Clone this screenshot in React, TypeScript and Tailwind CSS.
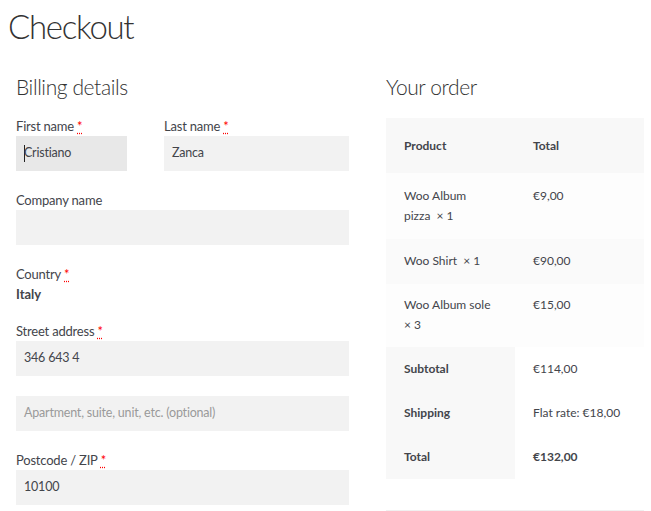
import React from "react";

const font = { fontFamily: "Lato, 'Noto Sans', sans-serif" };

function Req() {
  return (
    <abbr
      className="ml-[3px] text-[#ff0000] no-underline"
      style={{ textDecoration: "underline dotted", textUnderlineOffset: "2px" }}
      title="required"
    >
      *
    </abbr>
  );
}

function Label({ children, req }: { children: React.ReactNode; req?: boolean }) {
  return (
    <div className="h-[18px] text-[13px] leading-[16px] tracking-[-0.2px] text-[#43454b]">
      {children}
      {req && <Req />}
    </div>
  );
}

function Input({
  value,
  placeholder,
  focused,
  className = "",
}: {
  value?: string;
  placeholder?: string;
  focused?: boolean;
  className?: string;
}) {
  return (
    <div
      className={`flex h-[35px] items-center px-[8px] text-[12.5px] tracking-[-0.2px] ${
        focused ? "bg-[#e8e8e8]" : "bg-[#f2f2f2]"
      } ${className}`}
    >
      {focused && <span className="mr-[-1px] inline-block h-[17px] w-[1px] bg-[#222]" />}
      {value ? (
        <span className="text-[#43454b]">{value}</span>
      ) : (
        <span className="text-[#9a9a9a]">{placeholder}</span>
      )}
    </div>
  );
}

export default function App() {
  return (
    <div className="h-[511px] w-[651px] overflow-hidden bg-white text-[#43454b]" style={font}>
      <h1 className="pl-[8px] pt-[6px] text-[33px] font-light leading-[40px] tracking-[-1.3px] text-[#333]">
        Checkout
      </h1>
      <div className="mt-[32px] flex gap-[37px] pl-[16px]">
        <div className="w-[333px]">
          <h3 className="h-[40px] text-[21px] font-light leading-[18px] tracking-[-0.4px] text-[#333]">
            Billing details
          </h3>
          <div className="mb-[21px] flex gap-[37px]">
            <div className="w-[111px]">
              <Label req>First name</Label>
              <Input value="Cristiano" focused />
            </div>
            <div className="w-[185px]">
              <Label req>Last name</Label>
              <Input value="Zanca" />
            </div>
          </div>
          <div className="mb-[21px]">
            <Label>Company name</Label>
            <Input />
          </div>
          <div className="mb-[21px]">
            <Label req>Country</Label>
            <div className="h-[18px] text-[13px] font-bold leading-[20px] text-[#43454b]">Italy</div>
          </div>
          <div className="mb-[20px]">
            <Label req>Street address</Label>
            <Input value="346 643 4" />
          </div>
          <div className="mb-[21px]">
            <Input placeholder="Apartment, suite, unit, etc. (optional)" />
          </div>
          <div>
            <Label req>Postcode / ZIP</Label>
            <Input value="10100" />
          </div>
        </div>
        <div className="w-[258px]">
          <h3 className="h-[40px] text-[21px] font-light leading-[18px] tracking-[-0.4px] text-[#333]">
            Your order
          </h3>
          <table className="w-[258px] table-fixed border-collapse text-[12px] leading-[20px]">
            <thead>
              <tr className="h-[55px] bg-[#f8f8f8]">
                <th className="w-[129px] px-[18px] text-left font-bold">Product</th>
                <th className="w-[129px] px-[18px] text-left font-bold">Total</th>
              </tr>
            </thead>
            <tbody>
              <tr className="h-[65px] bg-[#fdfdfd] align-top">
                <td className="px-[18px] py-[13px]">Woo Album pizza&nbsp; ×&nbsp;1</td>
                <td className="px-[18px] py-[13px]">€9,00</td>
              </tr>
              <tr className="h-[45px] bg-[#fafafa] align-top">
                <td className="whitespace-nowrap px-[18px] py-[12px]">Woo Shirt&nbsp; ×&nbsp;1</td>
                <td className="px-[18px] py-[12px]">€90,00</td>
              </tr>
              <tr className="h-[63px] bg-[#fdfdfd] align-top">
                <td className="px-[18px] py-[11px]">Woo Album sole ×&nbsp;3</td>
                <td className="px-[18px] py-[11px]">€15,00</td>
              </tr>
            </tbody>
            <tfoot>
              <tr className="h-[44px]">
                <th className="bg-[#f8f8f8] px-[18px] text-left font-bold">Subtotal</th>
                <td className="bg-white px-[18px]">€114,00</td>
              </tr>
              <tr className="h-[44px]">
                <th className="bg-[#f8f8f8] px-[18px] text-left font-bold">Shipping</th>
                <td className="whitespace-nowrap bg-white px-[18px]">Flat rate: €18,00</td>
              </tr>
              <tr className="h-[44px]">
                <th className="bg-[#f8f8f8] px-[18px] text-left font-bold">Total</th>
                <td className="bg-white px-[18px] font-bold">€132,00</td>
              </tr>
            </tfoot>
          </table>
          <div className="mt-[31px] h-[1px] w-[258px] bg-[#f0f0f0]" />
        </div>
      </div>
    </div>
  );
}
